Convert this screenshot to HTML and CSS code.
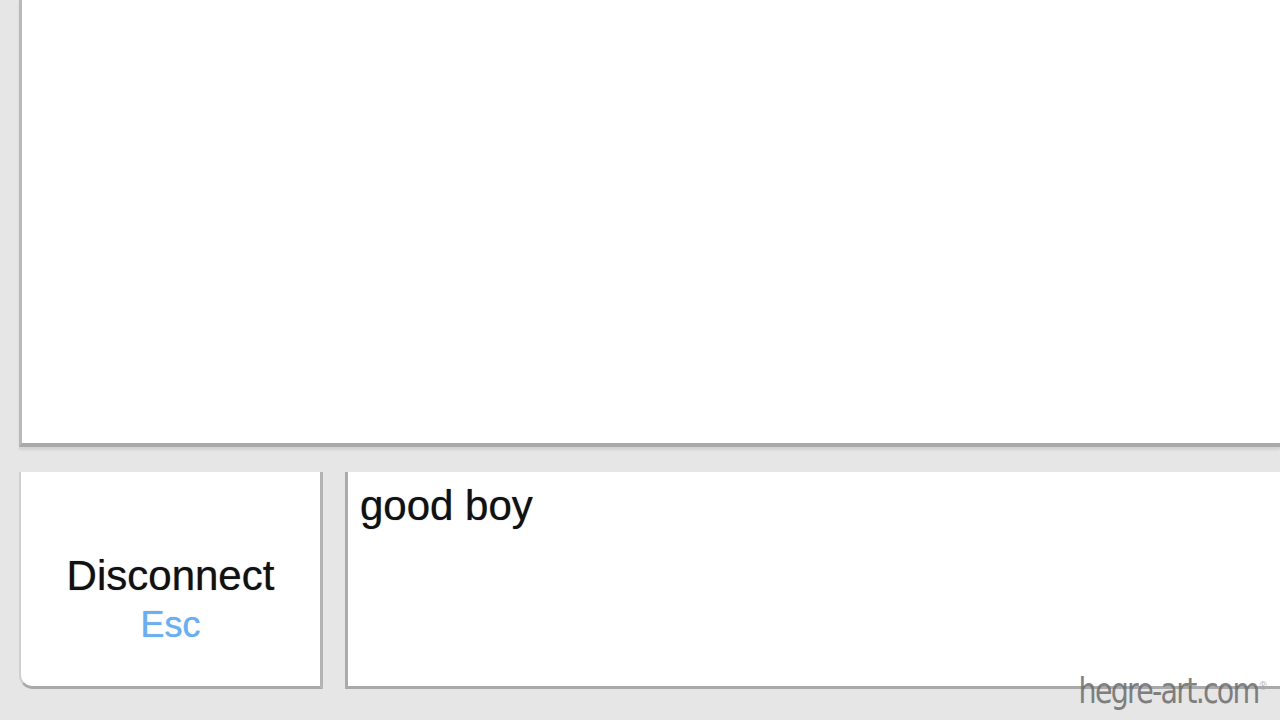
FILE: index.html
```html
<!DOCTYPE html>
<html>
<head>
<meta charset="utf-8">
<link rel="stylesheet" href="styles.css">
</head>
<body>
<div class="page">
  <div class="log"></div>
  <div class="controls">
    <div class="disconnect">
      <span class="btn-label">Disconnect</span>
      <span class="btn-key">Esc</span>
    </div>
    <div class="input">good boy</div>
  </div>
  <div class="watermark">hegre-art.com<sup>®</sup></div>
</div>
</body>
</html>
```
FILE: styles.css
```css
html, body {
  margin: 0;
  padding: 0;
  background: #e6e6e6;
  font-family: "Liberation Sans", Arial, sans-serif;
}
.page {
  position: relative;
  width: 1280px;
  height: 720px;
  overflow: hidden;
  padding-left: 19px;
  box-sizing: border-box;
}
.log {
  height: 447px;
  box-sizing: border-box;
  background: #fff;
  border-left: 3px solid #b9b9b9;
  border-bottom: 4px solid #a9a9a9;
  box-shadow: 0 3px 2px #d2d2d2;
}
.controls {
  display: flex;
  gap: 22px;
  margin-top: 25px;
  height: 217px;
}
.disconnect {
  width: 304px;
  box-sizing: border-box;
  background: #fff;
  border-left: 2px solid #cfcfcf;
  border-right: 3px solid #b3b3b3;
  border-bottom: 3px solid #a9a9a9;
  border-bottom-left-radius: 14px;
  display: flex;
  flex-direction: column;
  align-items: center;
  justify-content: flex-start;
  padding-top: 80px;
  color: #111;
}
.btn-label {
  font-size: 42px;
  line-height: 48px;
  text-shadow: 0 0 1px rgba(0, 0, 0, 0.6);
}
.btn-key {
  font-size: 36px;
  line-height: 50px;
  color: #6aaef2;
  text-shadow: 0 0 1px rgba(80, 150, 230, 0.7);
}
.input {
  flex: 1;
  box-sizing: border-box;
  background: #fff;
  border-left: 3px solid #ababab;
  border-bottom: 3px solid #a9a9a9;
  padding: 10px 12px;
  font-size: 42px;
  line-height: 48px;
  color: #111;
  text-shadow: 0 0 1px rgba(0, 0, 0, 0.6);
}
.watermark {
  position: absolute;
  right: 14px;
  bottom: 9px;
  font-family: "DejaVu Sans Condensed", "DejaVu Sans", sans-serif;
  font-size: 36px;
  letter-spacing: -2px;
  color: #6d6d6d;
  opacity: 0.85;
  transform: scaleX(0.88);
  transform-origin: right bottom;
}
.watermark sup {
  font-size: 12px;
  color: #aaa;
}
```
